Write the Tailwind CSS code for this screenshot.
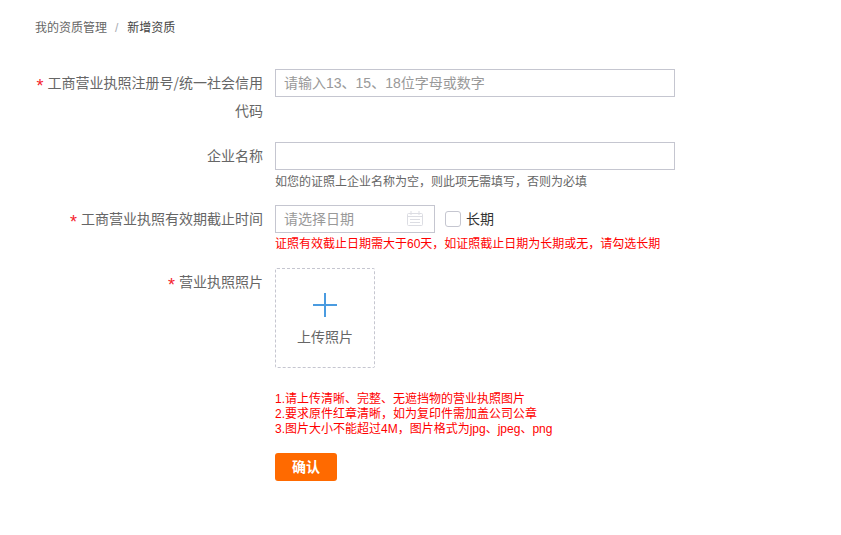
<!DOCTYPE html>
<html lang="zh-CN">
<head>
    <meta charset="UTF-8">
    <title>新增资质</title>
    <script src="https://cdn.jsdelivr.net/npm/@tailwindcss/browser@4"></script>
</head>
<body class="bg-white font-['Liberation_Sans','Noto_Sans_CJK_SC',sans-serif] text-[14px] text-[#666666]">
    <div class="pl-[35px] pr-[20px] pt-[19px]">
        <div class="flex items-center h-[18px] text-[12px] leading-[18px]">
            <span class="text-[#666666]">我的资质管理</span>
            <span class="ml-[8px] mr-[9px] text-[#a8abb2]">/</span>
            <span class="text-[#444444]">新增资质</span>
        </div>

        <form class="mt-[32px] flex flex-col">
            <div class="flex">
                <label class="w-[228px] text-right leading-[28px]"><span class="text-[18px] leading-[0] align-[-4px] text-[#f5222d] mr-[4px]">*</span>工商营业执照注册号<span class="font-['Noto_Sans_CJK_SC'] leading-[0]">/</span>统一社会信用代码</label>
                <div class="ml-[12px]">
                    <input class="block w-[400px] h-[28px] border border-[#c5c6d0] px-[8px] text-[14px] outline-none placeholder:text-[#999999]" placeholder="请输入13、15、18位字母或数字">
                </div>
            </div>

            <div class="flex mt-[17px]">
                <label class="w-[228px] text-right leading-[28px]">企业名称</label>
                <div class="ml-[12px]">
                    <input class="block w-[400px] h-[28px] border border-[#c5c6d0] px-[8px] outline-none">
                    <p class="mt-[2px] pt-[1px] text-[12px] leading-[18px] text-[#666666]">如您的证照上企业名称为空，则此项无需填写，否则为必填</p>
                </div>
            </div>

            <div class="flex mt-[14px]">
                <label class="w-[228px] text-right leading-[28px]"><span class="text-[18px] leading-[0] align-[-4px] text-[#f5222d] mr-[4px]">*</span>工商营业执照有效期截止时间</label>
                <div class="ml-[12px]">
                    <div class="flex items-center">
                        <div class="flex items-center justify-between w-[160px] h-[28px] border border-[#c5c6d0] pl-[8px] pr-[11px] text-[#999999]">
                            <span>请选择日期</span>
                            <svg width="16" height="16" viewBox="0 0 16 16" fill="none" stroke="#dcdde3">
                                <rect x="0.5" y="2.5" width="15" height="12" rx="1"/>
                                <path d="M4 0v4M12 0v4M0.5 5.5h15M3 8.5h10M3 11.5h10" />
                            </svg>
                        </div>
                        <span class="ml-[10px] w-[16px] h-[16px] border border-[#c5c6d0] rounded-[3px]"></span>
                        <span class="ml-[5px] text-[#333333] text-[14px]">长期</span>
                    </div>
                    <p class="mt-[2px] text-[12px] leading-[18px] text-[#ff0000]">证照有效截止日期需大于60天，如证照截止日期为长期或无，请勾选长期</p>
                </div>
            </div>

            <div class="flex mt-[15px]">
                <label class="w-[228px] text-right leading-[28px]"><span class="text-[18px] leading-[0] align-[-4px] text-[#f5222d] mr-[4px]">*</span>营业执照照片</label>
                <div class="ml-[12px]">
                    <div class="flex flex-col items-center w-[100px] h-[100px] border border-dashed border-[#c5c6d0] rounded-[2px]">
                        <svg class="mt-[24px]" width="24" height="24" viewBox="0 0 24 24">
                            <path d="M0 12h24M12 0v24" stroke="#4a9be0" stroke-width="2"/>
                        </svg>
                        <span class="mt-[11px] text-[14px] leading-[18px]">上传照片</span>
                    </div>
                    <div class="mt-[24px] text-[12px] leading-[15px] text-[#ff0000]">
                        <p>1.请上传清晰、完整、无遮挡物的营业执照图片</p>
                        <p>2.要求原件红章清晰，如为复印件需加盖公司公章</p>
                        <p>3.图片大小不能超过4M，图片格式为jpg、jpeg、png</p>
                    </div>
                    <button type="button" class="block mt-[16px] w-[62px] h-[28px] bg-[#ff6a00] rounded-[3px] text-white text-[14px] font-bold">确认</button>
                </div>
            </div>
        </form>
    </div>
</body>
</html>
